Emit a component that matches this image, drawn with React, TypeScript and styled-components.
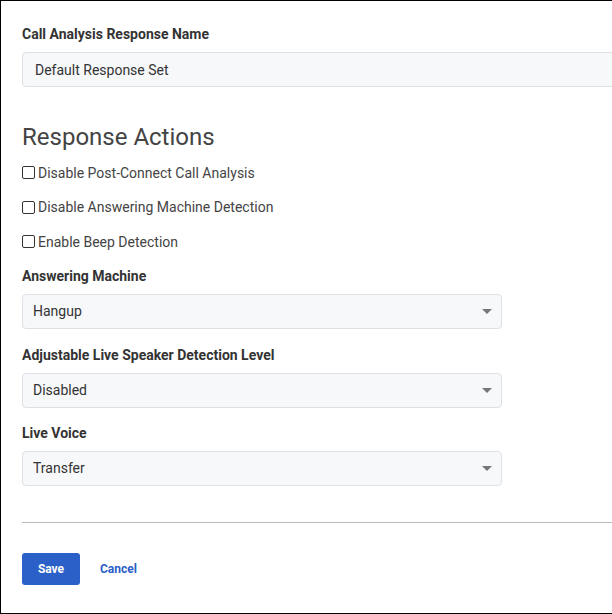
import styled, { createGlobalStyle } from "styled-components";

const Global = createGlobalStyle`
  html, body { margin: 0; padding: 0; background: #fff; }
  body { font-family: Roboto, "Liberation Sans", sans-serif; color: #333; }
`;

const Frame = styled.div`
  box-sizing: border-box;
  width: 612px;
  height: 614px;
  border: 1px solid #000;
  border-right: none;
  overflow: hidden;
  padding: 0 0 0 21px;
`;

const Label = styled.div`
  font-size: 14px;
  font-weight: 700;
  color: #333;
  line-height: 17px;
  margin-top: ${(p: { $top: number }) => p.$top}px;
  margin-bottom: 9px;
`;

const TextBox = styled.div`
  box-sizing: border-box;
  width: 620px;
  height: 35px;
  border: 1px solid #dde1e6;
  border-radius: 4px;
  background: #f7f8fa;
  font-size: 14px;
  color: #333;
  padding: 0 12px;
  display: flex;
  align-items: center;
`;

const Heading = styled.h2`
  font-size: 24px;
  font-weight: 400;
  color: #444;
  margin: 36px 0 13px;
  line-height: 28px;
`;

const CheckRow = styled.label`
  display: flex;
  align-items: center;
  gap: 3px;
  font-size: 14px;
  color: #444;
  height: 17px;
  margin-bottom: 17.5px;
`;

const Box = styled.span`
  width: 11px;
  height: 11px;
  border: 1px solid #333;
  border-radius: 2px;
  background: #fff;
`;

const Select = styled(TextBox)`
  width: 480px;
  justify-content: space-between;
  padding: 0 9px 0 10px;
`;

const Caret = styled.span`
  width: 0;
  height: 0;
  border-left: 5px solid transparent;
  border-right: 5px solid transparent;
  border-top: 5px solid #777;
`;

const Divider = styled.hr`
  border: none;
  border-top: 1px solid #bbb;
  margin: 36px 0 30px;
  width: 600px;
`;

const Actions = styled.div`
  display: flex;
  align-items: center;
  gap: 20px;
`;

const SaveButton = styled.button`
  width: 58px;
  height: 32px;
  border: none;
  border-radius: 3px;
  background: #2a60c8;
  color: #fff;
  font-family: inherit;
  font-size: 12px;
  font-weight: 700;
`;

const CancelLink = styled.span`
  color: #2a60c8;
  font-size: 12px;
  font-weight: 700;
`;

const checks = [
  "Disable Post-Connect Call Analysis",
  "Disable Answering Machine Detection",
  "Enable Beep Detection",
];

const selects = [
  { label: "Answering Machine", value: "Hangup", top: 0 },
  { label: "Adjustable Live Speaker Detection Level", value: "Disabled", top: 18 },
  { label: "Live Voice", value: "Transfer", top: 17 },
];

export default function App() {
  return (
    <>
      <Global />
      <Frame>
        <Label $top={25}>Call Analysis Response Name</Label>
        <TextBox>Default Response Set</TextBox>
        <Heading>Response Actions</Heading>
        {checks.map((c) => (
          <CheckRow key={c}>
            <Box />
            {c}
          </CheckRow>
        ))}
        {selects.map((s) => (
          <div key={s.label}>
            <Label $top={s.top}>{s.label}</Label>
            <Select>
              {s.value}
              <Caret />
            </Select>
          </div>
        ))}
        <Divider />
        <Actions>
          <SaveButton>Save</SaveButton>
          <CancelLink>Cancel</CancelLink>
        </Actions>
      </Frame>
    </>
  );
}
